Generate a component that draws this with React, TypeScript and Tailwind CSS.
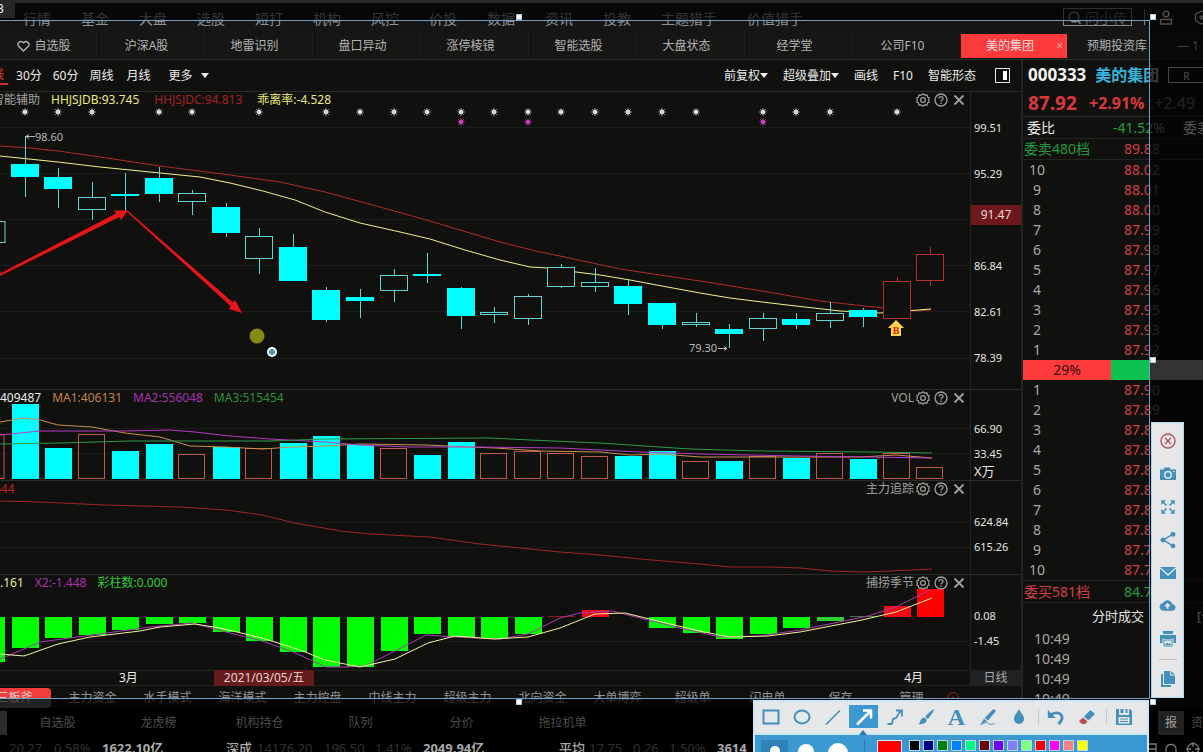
import type { ReactNode } from 'react';
import { IoMdCloudUpload } from 'react-icons/io';
import { MdShare } from 'react-icons/md';

type CandleKind = 'down' | 'flat' | 'up';
type Candle = [high: number, top: number, bottom: number, low: number, kind: CandleKind];
type Bar = [top: number, bottom: number, color: string];

interface AxisLabel {
  className?: string;
  text: string;
}

const CYAN = '#00ffff';
const RED = '#b5302c';
const LIME = '#00ff00';

const barX = (index: number) => Math.round(24.5 + 33.55 * index);

const MENU = ['行情', '基金', '大盘', '选股', '短打', '机构', '风控', '价投', '数据', '资讯', '投教', '主题猎手', '价值猎手'];
const TABS = ['沪深A股', '地雷识别', '盘口异动', '涨停棱镜', '智能选股', '大盘状态', '经学堂', '公司F10'];
const MODES = ['主力资金', '水手模式', '海洋模式', '主力控盘', '中线主力', '超级主力', '北向资金', '大单博弈', '超级单', '闪电单'];
const LISTS = ['自选股', '龙虎榜', '机构持仓', '队列', '分价', '拖拉机单'];

const CANDLES: Candle[] = [
  [136, 164, 177, 197, 'down'],
  [168, 177, 189, 208, 'down'],
  [182, 197, 209, 220, 'flat'],
  [173, 194, 196, 211, 'down'],
  [167, 178, 194, 202, 'down'],
  [190, 193, 201, 215, 'flat'],
  [203, 207, 233, 237, 'down'],
  [228, 236, 258, 274, 'flat'],
  [234, 247, 281, 281, 'down'],
  [287, 290, 320, 322, 'down'],
  [289, 297, 301, 318, 'down'],
  [269, 275, 290, 302, 'flat'],
  [253, 274, 276, 283, 'down'],
  [287, 288, 316, 329, 'down'],
  [307, 312, 314, 323, 'flat'],
  [294, 296, 318, 325, 'flat'],
  [264, 267, 286, 288, 'flat'],
  [268, 282, 286, 292, 'flat'],
  [279, 286, 304, 315, 'down'],
  [303, 303, 325, 329, 'down'],
  [313, 322, 324, 327, 'flat'],
  [324, 329, 334, 348, 'down'],
  [313, 318, 328, 341, 'flat'],
  [313, 319, 325, 329, 'down'],
  [302, 313, 320, 328, 'flat'],
  [308, 310, 317, 327, 'down'],
  [277, 281, 318, 318, 'up'],
  [247, 254, 280, 286, 'up'],
];

const NO_STAR = [3, 6, 8, 21, 25, 27];
const PINK_STAR = [13, 15, 22];

const VOLUMES: [top: number, filled: boolean][] = [
  [404, true], [448, true], [434, false], [451, true], [444, true], [454, false], [447, true],
  [448, false], [443, true], [436, true], [445, true], [448, false], [455, true], [442, true],
  [453, false], [451, false], [453, false], [456, false], [456, true], [451, true], [461, false],
  [461, true], [456, false], [458, true], [453, false], [459, true], [453, false], [467, false],
];

const CYCLES: Bar[] = [
  [617, 648, LIME], [617, 638, LIME], [617, 635, LIME], [617, 630, LIME], [617, 624, LIME],
  [617, 623, LIME], [617, 632, LIME], [617, 641, LIME], [617, 652, LIME], [617, 667, LIME],
  [617, 667, LIME], [617, 651, LIME], [617, 634, LIME], [617, 637, LIME], [617, 639, LIME],
  [617, 634, LIME], [616, 617, '#8a1c1c'], [610, 617, '#f00a14'], [617, 617, LIME], [617, 628, LIME],
  [617, 633, LIME], [617, 639, LIME], [617, 634, LIME], [617, 628, LIME], [617, 621, '#2fd030'],
  [616, 617, '#3f7a3f'], [606, 617, '#f00a14'], [589, 617, '#ff0000'],
];

const ASKS = [
  ['10', '88.02'], ['9', '88.01'], ['8', '88.00'], ['7', '87.99'], ['6', '87.98'],
  ['5', '87.97'], ['4', '87.96'], ['3', '87.95'], ['2', '87.93'], ['1', '87.92'],
];
const BIDS = [
  ['1', '87.90'], ['2', '87.89'], ['3', '87.88'], ['4', '87.87'], ['5', '87.86'],
  ['6', '87.85'], ['7', '87.83'], ['8', '87.81'], ['9', '87.79'], ['10', '87.78'],
];

const SWATCHES = [
  ['black', '#000000'], ['navy', '#000080'], ['green', '#008000'], ['azure', '#0080ff'],
  ['mint', '#00ff80'], ['maroon', '#6e0000'], ['violet', '#7400f0'], ['periwinkle', '#8080ff'],
  ['light green', '#80ff80'], ['red', '#f80000'], ['magenta', '#ff00ff'], ['salmon', '#f78080'],
  ['yellow', '#ffff00'],
];

const GearIcon = () => (
  <svg className="size-[14px]" fill="none" stroke="currentColor" strokeWidth="1.2" viewBox="0 0 14 14">
    <path d="M7 .8 8.8 2.2 11 2l.7 2.2 1.5.6-.6 2.2.6 2.2-1.5.6L11 12l-2.200-.2L7 13.2l-1.8-1.4L3 12l-.7-2.2-1.5-.6L1.4 7 .8 4.8l1.5-.6L3 2l2.2.2z" />
    <circle cx="7" cy="7" r="2.4" />
  </svg>
);

const HelpIcon = () => (
  <svg className="size-[14px]" fill="none" stroke="currentColor" strokeWidth="1.3" viewBox="0 0 14 14">
    <circle cx="7" cy="7" r="6" />
    <path d="M5 5.6C5 3 9 3 9 5.5 9 7 7 7 7 8.6M7 9.6v1.3" />
  </svg>
);

const CrossIcon = () => (
  <svg className="size-[14px]" fill="none" stroke="currentColor" strokeWidth="1.8" viewBox="0 0 14 14">
    <path d="m2.5 2.5 9 9m0-9-9 9" />
  </svg>
);

const PanelControls = ({ title }: { title?: string }) => (
  <div className="ml-auto flex items-center gap-1 text-[#a0a0a0]">
    {title && <span className="-mr-[2px]">{title}</span>}
    <button aria-label="设置" type="button"><GearIcon /></button>
    <button aria-label="帮助" type="button"><HelpIcon /></button>
    <button aria-label="关闭" type="button"><CrossIcon /></button>
  </div>
);

interface PanelProps {
  axis: ReactNode;
  chart: ReactNode;
  className: string;
  legend: ReactNode;
  title?: string;
  viewBox: string;
}

const Panel = ({ axis, chart, className, legend, title, viewBox }: PanelProps) => (
  <section className={`flex border-t border-[#2b2d2b] ${className}`}>
    <div className="relative min-w-0 flex-1">
      <svg className="absolute inset-0 h-full w-full" preserveAspectRatio="xMaxYMin meet" viewBox={viewBox}>
        {chart}
      </svg>
      <div className="relative flex h-4 items-center gap-[11px] overflow-hidden pr-1 text-xs leading-4 whitespace-nowrap">
        {legend}
        <PanelControls title={title} />
      </div>
    </div>
    <div className="w-[51px] shrink-0 border-l border-[#242624] text-[11px] text-[#e4e4e4]">{axis}</div>
  </section>
);

const AxisLabels = ({ labels }: { labels: AxisLabel[] }) => (
  <>
    {labels.map(({ className = 'h-[25px]', text }) => (
      <div className={`flex items-center pl-[3px] leading-none ${className}`} key={text}>{text}</div>
    ))}
  </>
);

const Line = ({ color, points }: { color: string; points: string }) => (
  <polyline fill="none" points={points} stroke={color} strokeWidth="1" />
);

const GridLines = ({ at }: { at: number[] }) => (
  <g stroke="#1a1c19">
    {at.map((y) => <path d={`M0 ${y}.5H970`} key={y} />)}
  </g>
);

const Star = ({ color, x, y }: { color: string; x: number; y: number }) => (
  <g fill={color} stroke={color}>
    <circle cx={x} cy={y} r="2.4" stroke="none" />
    <path d={`M${x - 4} ${y}h8M${x} ${y - 4}v8M${x - 3} ${y - 3}l6 6M${x + 3} ${y - 3}l-6 6`} opacity=".7" strokeWidth=".8" />
  </g>
);

const CandleChart = () => (
  <>
    <GridLines at={[127, 173, 219, 265, 311, 358]} />
    {CANDLES.map((_, i) => (
      <g key={i}>
        {!NO_STAR.includes(i) && <Star color="#d8d8d8" x={barX(i)} y={112} />}
        {PINK_STAR.includes(i) && <Star color="#c43fb0" x={barX(i)} y={122} />}
      </g>
    ))}
    <Line
      color="#b02a2a"
      points="0,146 30,148 58,151 100,157 160,166 230,175 280,182 325,192 380,207 430,221 500,242 540,252 560,256 620,269 700,281 762,291 820,301 883,308 915,311 931,310"
    />
    <Line
      color="#f4f08a"
      points="0,156 58,162 100,167 160,173 200,177 230,183 263,191 295,200 325,212 360,223 400,232 430,239 465,250 500,260 530,267 548,268 576,272 600,275 630,280 662,286 700,293 730,298 762,302 796,306 840,311 880,313 931,309"
    />
    <rect fill="#10110e" height="21" stroke="#6fd6d6" width="27" x="-22" y="221.5" />
    {CANDLES.map(([high, top, bottom, low, kind], i) => {
      const x = barX(i);
      const stroke = kind === 'up' ? RED : '#63d4d4';
      return (
        <g key={i} stroke={stroke}>
          <path d={`M${x}.5 ${high}V${top}M${x}.5 ${bottom}V${low}`} />
          {kind === 'down' ? (
            <rect fill={CYAN} height={bottom - top} stroke="none" width="28" x={x - 14} y={top} />
          ) : (
            <rect fill="#10110e" height={bottom - top} width="27" x={x - 13.5} y={top + 0.5} />
          )}
        </g>
      );
    })}
    <g fill="none" stroke="#b8b8b8">
      <path d="M35 136.5H26m3-2-3 2 3 2M718 348.5h9m-3-2 3 2-3 2" />
    </g>
    <g fill="#b8b8b8" fontSize="11">
      <text x="35" y="141">98.60</text>
      <text x="689" y="352">79.30</text>
    </g>
    <path d="M896 320l8 8h-3v8h-10v-8h-3z" fill="#ffd24a" />
    <text className="font-['Liberation_Serif',serif]" fill="#d81e10" fontSize="10" fontWeight="700" textAnchor="middle" x="896" y="334">B</text>
    <g fill="#e8141c">
      <path d="M0 276v-2.5L116 213.5l-2-3h14L121 220l-1.5-3z" />
      <path d="M126 211h2l105 91.5 2-2.5 7 13-13-4 1.5-3z" />
    </g>
    <circle cx="257" cy="336" fill="#868a14" r="7.5" />
    <circle cx="272" cy="352" fill="#5a91ad" r="4" stroke="#fff" strokeWidth="2" />
  </>
);

const VolumeChart = () => (
  <>
    <GridLines at={[428, 453]} />
    <rect fill="none" height="44" stroke="#bf5a50" width="26" x="-22" y="434.5" />
    {VOLUMES.map(([top, filled], i) =>
      filled ? (
        <rect fill={CYAN} height={479 - top} key={i} width="27" x={barX(i) - 13} y={top} />
      ) : (
        <rect fill="none" height={478 - top} key={i} stroke="#bf5a50" width="26" x={barX(i) - 13.5} y={top + 0.5} />
      ),
    )}
    <Line
      color="#c98f4e"
      points="0,422 24,418 40,420 58,425 92,427 125,433 160,437 190,446 226,447 262,449 293,447 326,446 360,444 427,445 470,447 495,448 540,451 600,452 630,455 662,454 700,457 762,457 860,457 896,455 932,458"
    />
    <Line
      color="#b43cc4"
      points="0,435 20,433 40,431 125,431 170,430 195,432 230,436 270,439 326,442 360,445 410,447 470,447 560,448 600,450 640,452 700,454 800,456 932,458"
    />
    <Line
      color="#2f9a4a"
      points="0,444 60,443 130,441 270,441 326,439 490,438 530,440 600,443 690,449 760,451 870,452 932,453"
    />
  </>
);

const ForceChart = () => (
  <>
    <GridLines at={[522, 547]} />
    <Line
      color="#a02626"
      points="0,501 40,502 105,505 180,507 226,510 262,515 295,523 340,531 370,534 430,537 480,544 520,548 560,552 600,555 640,559 700,564 730,567 770,567 800,568 830,571 865,572 890,571 932,569"
    />
  </>
);

const CycleChart = () => (
  <>
    <GridLines at={[641]} />
    <rect fill={LIME} height="45" width="5" x="0" y="617" />
    {CYCLES.map(([top, bottom, color], i) => (
      <rect fill={color} height={bottom - top} key={i} width="27" x={barX(i) - 13} y={top} />
    ))}
    <Line
      color="#a83bb0"
      points="0,659 24,649 40,642 92,635 150,627 192,623 226,632 262,641 293,652 326,667 345,667 365,666 395,651 426,635 455,637 500,639 528,634 560,618 580,613 612,611 640,618 680,628 720,637 760,636 800,630 868,616 896,607 930,590"
    />
    <Line
      color="#f6f29a"
      points="0,654 24,656 58,644 90,637 140,631 160,627 195,624 220,628 262,638 300,650 325,660 360,667 395,659 428,643 455,636 494,639 528,637 560,628 595,614 625,613 662,622 695,630 729,637 768,636 800,632 862,620 896,612 932,598"
    />
  </>
);

const Header = () => (
  <header className="flex h-[33px] items-start border-t-[3px] border-[#777] bg-[#141514] text-sm text-[#8f9296]">
    <nav className="flex h-8 items-center gap-[30px] pl-[23px] leading-none whitespace-nowrap">
      {MENU.map((item) => <a href="#" key={item}>{item}</a>)}
    </nav>
    <div className="mt-[5px] mr-[-6px] ml-auto flex shrink-0 items-center">
      <label className="flex h-[18px] w-[69px] items-center gap-1 border border-[#8a8a8a] pl-1">
        <svg className="size-[13px] shrink-0" fill="none" stroke="currentColor" strokeWidth="1.5" viewBox="0 0 13 13">
          <circle cx="6" cy="6" r="4.8" />
          <path d="m9.5 9.5 3 3" />
        </svg>
        <input aria-label="问小传" className="w-11 bg-transparent text-sm leading-none outline-none placeholder:text-[#66696c]" placeholder="问小传" />
      </label>
      <span className="ml-3 h-4 w-px bg-[#8a8a8a]" />
      <button aria-label="用户" className="ml-[14px]" type="button">
        <svg className="size-[15px]" fill="none" stroke="#e8e8e8" strokeWidth="1.3" viewBox="0 0 15 15">
          <circle cx="7" cy="4" r="2.8" />
          <path d="M1.5 14V9.5h11V14z" />
        </svg>
      </button>
      <button aria-label="设置" className="ml-5" type="button">
        <svg className="size-[15px]" fill="none" stroke="#e8e8e8" strokeWidth="1.3" viewBox="0 0 15 15">
          <path d="m7.5 1 6 3.3v6.4l-6 3.3-6-3.3V4.3z" />
          <circle cx="7.5" cy="7.5" r="1.5" />
        </svg>
      </button>
    </div>
  </header>
);

const TabBar = () => (
  <nav className="flex h-[27px] overflow-hidden border-b border-[#292b29] bg-[#161715] text-xs whitespace-nowrap text-[#b4b4b4]">
    <button className="flex w-[97px] shrink-0 items-center justify-center gap-1 border-r border-[#1f211f] pr-2" type="button">
      <svg className="h-3 w-[13px]" fill="none" stroke="currentColor" strokeWidth="1.4" viewBox="0 0 13 12">
        <path d="M6.5 11 1.7 6.2C-.5 3.5 3.5-.6 6.5 2.8c3-3.4 7 .7 4.8 3.4z" />
      </svg>
      自选股
    </button>
    {TABS.map((tab) => (
      <button className="w-[108px] shrink-0 border-r border-[#1f211f] pr-2" key={tab} type="button">{tab}</button>
    ))}
    <button className="relative my-px h-6 w-[106px] shrink-0 bg-[#fd3a3c] pr-2 text-[#f6dede]" type="button">
      美的集团
      <span className="absolute right-1 text-[#f3a3a3]">×</span>
    </button>
    <button className="w-[100px] shrink-0" type="button">预期投资库</button>
    <span className="self-center pl-[10px] text-[#b4b4b4]">— 1</span>
  </nav>
);

const Caret = () => (
  <svg className="h-[5px] w-2" fill="currentColor" viewBox="0 0 8 5"><path d="M0 0h8L4 5z" /></svg>
);

const PeriodBar = () => (
  <div className="flex h-[31px] shrink-0 items-center overflow-hidden pr-[11px] text-xs leading-4 whitespace-nowrap text-[#ececec]">
    <button className="-ml-2 border-b-2 border-[#c8302e] pr-1 text-[#e23c38]" type="button">线</button>
    <div className="ml-2 flex gap-[11px]">
      <button type="button">30分</button>
      <button type="button">60分</button>
      <button className="mr-[2px]" type="button">周线</button>
      <button type="button">月线</button>
      <button className="ml-[7px] flex items-center gap-2" type="button">更多 <Caret /></button>
    </div>
    <div className="ml-auto flex items-center gap-[15px]">
      <button className="flex items-center" type="button">前复权<Caret /></button>
      <button className="flex items-center" type="button">超级叠加<Caret /></button>
      <button type="button">画线</button>
      <button type="button">F10</button>
      <button type="button">智能形态</button>
      <button aria-label="侧栏" className="ml-1" type="button">
        <svg className="size-[15px]" viewBox="0 0 15 15">
          <path d="M.5.5h14v14H.5z" fill="none" stroke="#ececec" />
          <path d="M8 3h4v9H8z" fill="#fff" />
        </svg>
      </button>
    </div>
  </div>
);

const ChartColumn = () => (
  <main className="flex min-w-0 flex-1 flex-col overflow-hidden">
    <PeriodBar />
    <Panel
      axis={
        <div className="pt-3">
          <AxisLabels
            labels={[
              { className: 'h-[46px]', text: '99.51' },
              { className: 'h-[46px]', text: '95.29' },
            ]}
          />
          <div className="h-[46px] pt-[9px]">
            <div className="h-5 bg-[#6e171c] text-center text-xs leading-5 text-[#f0d8d8]">91.47</div>
          </div>
          <AxisLabels
            labels={[
              { className: 'h-[46px]', text: '86.84' },
              { className: 'h-[46px]', text: '82.61' },
              { className: 'h-[46px]', text: '78.39' },
            ]}
          />
        </div>
      }
      chart={<CandleChart />}
      className="min-h-0 flex-1"
      legend={
        <>
          <span className="-ml-2 text-[#a4a4a4]">智能辅助</span>
          <span className="text-[#eeea80]">HHJSJDB:93.745</span>
          <span className="ml-1 text-[#a32222]">HHJSJDC:94.813</span>
          <span className="ml-1 text-[#eeea80]">乖离率:-4.528</span>
        </>
      }
      viewBox="0 92 970 297"
    />
    <Panel
      axis={
        <div className="pt-[26px]">
          <AxisLabels labels={[{ text: '66.90' }, { text: '33.45' }, { className: 'h-[10px] text-[13px]', text: 'X万' }]} />
        </div>
      }
      chart={<VolumeChart />}
      className="h-[91px] shrink-0"
      legend={
        <>
          <span className="text-[#ececec]">409487</span>
          <span className="text-[#c08648]">MA1:406131</span>
          <span className="text-[#a832b0]">MA2:556048</span>
          <span className="text-[#2f8f40]">MA3:515454</span>
        </>
      }
      title="VOL"
      viewBox="0 390 970 90"
    />
    <Panel
      axis={<div className="pt-7"><AxisLabels labels={[{ text: '624.84' }, { text: '615.26' }]} /></div>}
      chart={<ForceChart />}
      className="h-[94px] shrink-0"
      legend={<span className="-ml-[6px] text-[#b02626]">644</span>}
      title="主力追踪"
      viewBox="0 481 970 93"
    />
    <Panel
      axis={<div className="pt-7"><AxisLabels labels={[{ text: '0.08' }, { text: '-1.45' }]} /></div>}
      chart={<CycleChart />}
      className="h-24 shrink-0"
      legend={
        <>
          <span className="text-[#eeea90]">.161</span>
          <span className="text-[#a832b0]">X2:-1.448</span>
          <span className="text-[#32cc3c]">彩柱数:0.000</span>
        </>
      }
      title="捕捞季节"
      viewBox="0 575 970 95"
    />
    <div className="flex h-4 shrink-0 items-center border-y border-[#232523] text-xs leading-4 whitespace-nowrap text-[#ececec]">
      <span className="w-[214px] shrink-0 pl-[119px]">3月</span>
      <span className="w-[100px] shrink-0 bg-[#651a1c] text-center text-[#eed4d4]">2021/03/05/五</span>
      <span className="mr-[47px] ml-auto">4月</span>
      <span className="w-[51px] bg-[#202122] text-center text-[#a8a8a8]">日线</span>
    </div>
    <nav className="flex h-[22px] shrink-0 items-center overflow-hidden pt-[2px] text-xs whitespace-nowrap text-[#8f9296]">
      <button className="mr-1 h-5 w-[51px] shrink-0 rounded-r-sm bg-[#f23c3c] pr-[18px] text-[#f4d0d0]" type="button">
        <span className="-ml-1">三板斧</span>
      </button>
      {MODES.map((mode) => <button className="w-[75px] shrink-0" key={mode} type="button">{mode}</button>)}
      <button className="w-[71px] shrink-0" type="button">保存</button>
      <button className="w-[71px] shrink-0" type="button">管理</button>
      <svg className="size-3 shrink-0" fill="none" stroke="#9a2020" viewBox="0 0 12 12">
        <circle cx="6" cy="6" r="5.5" />
        <circle cx="6" cy="6" fill="#9a2020" r="1" />
      </svg>
    </nav>
  </main>
);

const BookRows = ({ rows }: { rows: string[][] }) => (
  <table className="w-full text-left text-sm leading-5">
    <tbody>
      {rows.map(([level, price]) => (
        <tr className="h-5" key={level}>
          <th className="w-7 p-0 text-center font-normal text-[#a8a8a8]" scope="row">{level}</th>
          <td className="p-0 pl-[73px] text-[#d23f45]">{price}</td>
        </tr>
      ))}
    </tbody>
  </table>
);

const QuotePanel = () => (
  <aside className="w-[182px] shrink-0 overflow-hidden border-l-2 border-[#242624] text-sm whitespace-nowrap">
    <div className="flex h-[30px] items-center pl-[5px]">
      <span className="text-[17px] font-bold text-[#f2f2f2]">000333</span>
      <span className="ml-[9px] text-base font-bold text-[#35b4dc]">美的集团</span>
      <span className="ml-[9px] h-4 w-11 shrink-0 border border-[#c8c8c8] pr-2 text-center text-[10px] leading-4 text-[#ddd]">R</span>
    </div>
    <div className="flex h-[27px] items-center border-b border-[#2b2d2b] pl-[5px] text-base font-bold text-[#d8383e]">
      <span className="w-[61px] text-[19px]">87.92</span>
      <span className="w-[65px]">+2.91%</span>
      <span className="font-medium">+2.49</span>
    </div>
    <div className="flex h-[22px] items-center border-b border-[#232523] pl-1 text-[#ececec]">
      <span className="w-[86px] shrink-0">委比</span>
      <span className="w-[70px] shrink-0 text-[#259a40]">-41.52%</span>
      <span className="shrink-0">委差</span>
    </div>
    <div className="flex h-[21px] items-center border-b border-[#232523] pl-px">
      <span className="w-[100px] text-[#259a40]">委卖480档</span>
      <span className="text-[#d23f45]">89.88</span>
    </div>
    <BookRows rows={ASKS} />
    <div className="flex h-5 text-[#34100e]">
      <span className="w-[88px] shrink-0 bg-[#fd3a3c] text-center leading-5">29%</span>
      <span className="flex-1 bg-[#0cc150]" />
    </div>
    <BookRows rows={BIDS} />
    <div className="flex h-[23px] items-center border-y border-[#232523] pl-px">
      <span className="w-[100px] text-[#d23f45]">委买581档</span>
      <span className="text-[#259a40]">84.78</span>
    </div>
    <div className="flex h-[26px] items-center pl-[69px] text-[13px] text-[#e4e4e4]">
      分时成交<span className="ml-[53px]">[详</span>
    </div>
    <ul className="pl-[11px] leading-5 text-[#a8a8a8]">
      {['a', 'b', 'c', 'd'].map((key) => <li key={key}>10:49</li>)}
    </ul>
  </aside>
);

const Footer = () => (
  <footer className="relative z-20 shrink-0 bg-black">
    <nav className="flex h-[27px] items-center overflow-hidden pt-[2px] text-xs whitespace-nowrap text-[#4c4c4c]">
      <span className="h-6 w-[7px] shrink-0 bg-[#2c2c2c]" />
      {LISTS.map((item) => <button className="w-[101px] shrink-0" key={item} type="button">{item}</button>)}
      <button className="mr-[7px] ml-auto h-6 w-[26px] shrink-0 bg-[#222] text-[#a0a0a0]" type="button">报</button>
      <button type="button">资</button>
    </nav>
    <div className="h-[17px] overflow-hidden">
      <div className="flex h-7 items-center text-[13px] whitespace-nowrap text-[#303030]">
        <span className="w-[42px] shrink-0 pl-[9px]">20.27</span>
        <span className="w-[60px] shrink-0 pl-3">0.58%</span>
        <b className="w-[124px] shrink-0 text-[#a8a8a8]">1622.10亿</b>
        <b className="w-[31px] shrink-0 font-medium text-[#a8a8a8]">深成</b>
        <span className="w-[67px] shrink-0">14176.20</span>
        <span className="w-[51px] shrink-0">196.50</span>
        <span className="w-12 shrink-0">1.41%</span>
        <b className="w-[136px] shrink-0 text-[#a8a8a8]">2049.94亿</b>
        <b className="w-[30px] shrink-0 font-medium text-[#a8a8a8]">平均</b>
        <span className="w-[44px] shrink-0">17.75</span>
        <span className="w-[36px] shrink-0">0.26</span>
        <span className="w-12 shrink-0">1.50%</span>
        <b className="text-[#a8a8a8]">3614</b>
        <svg className="ml-auto h-[14px] w-[54px] shrink-0" fill="none" stroke="#777" strokeWidth="1.3" viewBox="0 0 54 14">
          <path d="M0 2h7v12M0 7h7M17 13V7c0-6 10-6 10 0v6M15 13h14" />
          <circle cx="44" cy="7" r="5.5" />
          <path d="M44 0v5M44 9v5M37 7h5M46 7h5" />
        </svg>
      </div>
    </div>
  </footer>
);

const ToolIcon = ({ children }: { children: ReactNode }) => (
  <svg className="size-[18px]" fill="none" stroke="currentColor" strokeWidth="1.6" viewBox="0 0 18 18">
    {children}
  </svg>
);

const DRAW_TOOLS: { icon: ReactNode; name: string }[] = [
  { icon: <path d="M1.5 2.5h15v13h-15z" strokeWidth="2" />, name: 'Rectangle' },
  { icon: <ellipse cx="9" cy="9" rx="7.5" ry="6.5" strokeWidth="2" />, name: 'Ellipse' },
  { icon: <path d="M2 16.5 16 2.5" />, name: 'Line' },
  { icon: <path d="M2 16.5 15 3.5M8 2.5h8v8" strokeWidth="2.6" />, name: 'Arrow' },
  { icon: <path d="M1.5 16h3c4 0 0-5 4-5.5C12.5 10 10 7 15.5 2.5M10 2.5h6v6" strokeWidth="1.8" />, name: 'Curve' },
  {
    icon: <path d="M17 1.5c.6.6-5 9.3-6.5 9.3L8.3 8.7C9 7 16.2.8 17 1.5zM7.5 9.5l2.3 2.3C9.5 15 6 16.8 1.5 16 4 14.5 3 9.5 7.5 9.5z" fill="currentColor" stroke="none" />,
    name: 'Brush',
  },
];

const SketchBar = () => (
  <div className="absolute right-[54px] bottom-0 z-30 flex h-[52px] w-[396px] flex-col overflow-hidden border-x-2 border-t-2 border-[#c9e9fb] bg-[#e6e7e8] text-[#4490bb]">
    <div className="flex h-[31px] shrink-0 items-center pb-[2px]">
      {DRAW_TOOLS.map(({ icon, name }) => (
        <button
          aria-label={name}
          className={`mx-px flex h-[23px] w-[29px] shrink-0 items-center justify-center ${name === 'Arrow' ? 'bg-[#3c98d0] text-white' : ''}`}
          key={name}
          type="button"
        >
          <ToolIcon>{icon}</ToolIcon>
        </button>
      ))}
      <button className="w-[31px] font-['Liberation_Serif',serif] text-2xl leading-none font-bold" type="button">A</button>
      <button aria-label="Marker" className="flex w-[31px] justify-center" type="button">
        <ToolIcon>
          <path d="m14.5 1 2.5 2-8 9.500-3.500-2.500zM5 10.800l3 2.500-4.500 2-2 1z" fill="currentColor" stroke="none" />
          <path d="M1.5 16.5c4-1 6-3 7-2s1 3 7 1" strokeWidth="1" />
        </ToolIcon>
      </button>
      <button aria-label="Blur" className="flex w-[31px] justify-center" type="button">
        <ToolIcon><path d="M9 1c2 4 5 6.5 5 10a5 5 0 0 1-10 0C4 7.5 7 5 9 1z" fill="currentColor" stroke="none" /></ToolIcon>
      </button>
      <span className="mr-px ml-1 h-4 w-px bg-[#c8c8c8]" />
      <button aria-label="Undo" className="flex w-[31px] justify-center" type="button">
        <ToolIcon>
          <path d="M4 6.5c9-4.5 15 2 7.5 9.5" strokeWidth="2.8" />
          <path d="M.8 2v8h8z" fill="currentColor" stroke="none" />
        </ToolIcon>
      </button>
      <button aria-label="Eraser" className="flex w-[31px] justify-center" type="button">
        <ToolIcon>
          <path d="m12.5 2 4.5 4-6.5 6.5L6 8.5z" fill="currentColor" stroke="none" />
          <path d="m5 9.5 4.5 4L7 16H4l-3-3z" fill="#b8505c" stroke="none" />
        </ToolIcon>
      </button>
      <span className="mr-px ml-1 h-4 w-px bg-[#c8c8c8]" />
      <button aria-label="Save" className="flex w-[31px] justify-center" type="button">
        <ToolIcon>
          <path d="M1 1h3v6h10V1h1l2 2v14H1z" fill="currentColor" stroke="none" />
          <path d="M5.5 1h3v4h-3zM10.5 1h2v4h-2z" fill="currentColor" stroke="none" />
          <path d="M3.5 9h11v6.5h-11z" fill="#e6e7e8" stroke="none" />
          <path d="M5 11h8M5 13.5h8" strokeWidth="1" />
        </ToolIcon>
      </button>
    </div>
    <div className="relative flex flex-1 items-start border-t-2 border-[#c9e9fb] bg-[#3c98d0] pt-[5px] pl-[6px]">
      <svg className="absolute -top-[5px] left-[104px] h-[5px] w-2" fill="#2d78a8" viewBox="0 0 8 5"><path d="M4 0l4 5H0z" /></svg>
      <button aria-label="Small" className="flex h-7 w-[27px] items-start justify-center bg-[#2f83b8] pt-[6px]" type="button"><span className="size-[10px] rounded-full bg-white" /></button>
      <button aria-label="Medium" className="flex w-9 justify-center pt-1" type="button"><span className="size-4 rounded-full bg-white" /></button>
      <button aria-label="Large" className="flex w-7 justify-center pt-[3px]" type="button"><span className="size-5 rounded-full bg-white" /></button>
      <span className="ml-3 h-5 w-px bg-[#2d78a8]" />
      <button aria-label="Current colour" className="mr-[7px] ml-3 h-5 w-[25px] border border-[#dceefa] bg-[#ff0000]" type="button" />
      <div className="flex gap-[3px]">
        {SWATCHES.map(([name, color]) => (
          <button aria-label={name} className="size-[11px] border border-[#b8d6e8]" key={name} style={{ backgroundColor: color }} type="button" />
        ))}
      </div>
    </div>
  </div>
);

const SideBar = () => (
  <div className="absolute top-[422px] right-[19px] z-30 flex w-[33px] flex-col items-center border border-[#a9d8f2] bg-[#e6e7e8] pt-px pb-1 text-[#4490bb]">
    <button aria-label="Close" className="flex h-[33px] items-center text-[#b8505c]" type="button">
      <svg className="size-4" fill="none" stroke="currentColor" strokeWidth="1.3" viewBox="0 0 16 16">
        <circle cx="8" cy="8" r="7" />
        <path d="m5 5 6 6m0-6-6 6" />
      </svg>
    </button>
    <button aria-label="Capture" className="flex h-[33px] items-center" type="button">
      <svg className="size-4" fill="currentColor" fillRule="evenodd" viewBox="0 0 16 16">
        <path d="M0 3.5h3.5l1-2h5l1 2H16V14H0zm8 1.3a4 4 0 1 0 0 8 4 4 0 0 0 0-8zm0 1.5a2.5 2.5 0 1 1 0 5 2.5 2.5 0 0 1 0-5zM13.2 5v1h1.5V5z" />
      </svg>
    </button>
    <button aria-label="Full screen" className="flex h-[33px] items-center" type="button">
      <svg className="size-[14px]" fill="currentColor" stroke="currentColor" viewBox="0 0 14 14">
        <path d="M.5.5h4l-4 4zM13.5.5v4l-4-4zM.5 13.5v-4l4 4zM13.5 13.5h-4l4-4z" strokeWidth=".5" />
        <path d="m2 2 3.5 3.5M12 2 8.5 5.5M2 12l3.5-3.5M12 12 8.5 8.5" strokeWidth="1.6" />
      </svg>
    </button>
    <button aria-label="Share" className="flex h-[33px] items-center" type="button"><MdShare className="size-5" /></button>
    <button aria-label="Mail" className="flex h-[33px] items-center" type="button">
      <svg className="h-3 w-4" fill="currentColor" viewBox="0 0 16 12">
        <path d="M0 0h16L8 7zM0 1.8 8 9l8-7.2V12H0z" />
      </svg>
    </button>
    <button aria-label="Upload" className="flex h-[33px] items-center" type="button"><IoMdCloudUpload className="size-[17px]" /></button>
    <button aria-label="Print" className="flex h-[33px] items-center" type="button">
      <svg className="size-4" fill="currentColor" viewBox="0 0 16 16">
        <path d="M3 0h10v3H3zM0 4h16v8h-2.5V8h-11v4H0z" />
        <path d="M4 9h8v6H4z" fill="none" stroke="currentColor" />
        <path d="m5 14 2-2.5 1.5 1.5 1-1L11 14z" />
      </svg>
    </button>
    <span className="my-1 h-px w-[18px] bg-[#c4c4c4]" />
    <button aria-label="Copy" className="flex h-[29px] items-center" type="button">
      <svg className="size-4" fill="currentColor" viewBox="0 0 16 16">
        <path d="M4 0h6v4.5h5V13H4zM11 0l4 3.5h-4zM1 3h2v11h8v2H1z" />
      </svg>
    </button>
  </div>
);

// Dimmed surroundings plus the blue frame and its drag handles.
const SelectionFrame = () => (
  <>
    <div className="absolute inset-x-0 top-0 z-10 h-5 bg-black/65 backdrop-grayscale" />
    <div className="absolute top-5 right-0 bottom-[54px] z-10 w-[53px] bg-black/65 backdrop-grayscale" />
    <div className="absolute inset-x-0 bottom-0 z-10 h-[54px] bg-black/65 backdrop-grayscale" />
    <div className="pointer-events-none absolute top-5 right-[53px] bottom-[53px] left-0 z-20 border-y border-r border-[#6f9fc6]" />
    {[
      'top-[14px] left-[516px]',
      'top-[14px] right-[47px]',
      'top-[357px] right-[47px]',
      'bottom-[47px] right-[47px]',
      'bottom-[47px] left-[516px]',
    ].map((place) => (
      <span className={`absolute z-30 size-[6px] border border-[#a9cfe8] bg-white ${place}`} key={place} />
    ))}
    <span className="absolute top-0 left-0 z-30 h-[18px] w-[15px] bg-[#262626] text-xs leading-[18px] text-[#eee]">
      <span className="-ml-[3px]">3</span>
    </span>
  </>
);

export default function App() {
  return (
    <div className="relative flex h-screen w-full flex-col overflow-hidden bg-[#10110e] font-['Noto_Sans','Noto_Sans_CJK_SC',sans-serif]">
      <Header />
      <TabBar />
      <div className="flex min-h-0 flex-1">
        <ChartColumn />
        <QuotePanel />
      </div>
      <Footer />
      <SelectionFrame />
      <SketchBar />
      <SideBar />
    </div>
  );
}
